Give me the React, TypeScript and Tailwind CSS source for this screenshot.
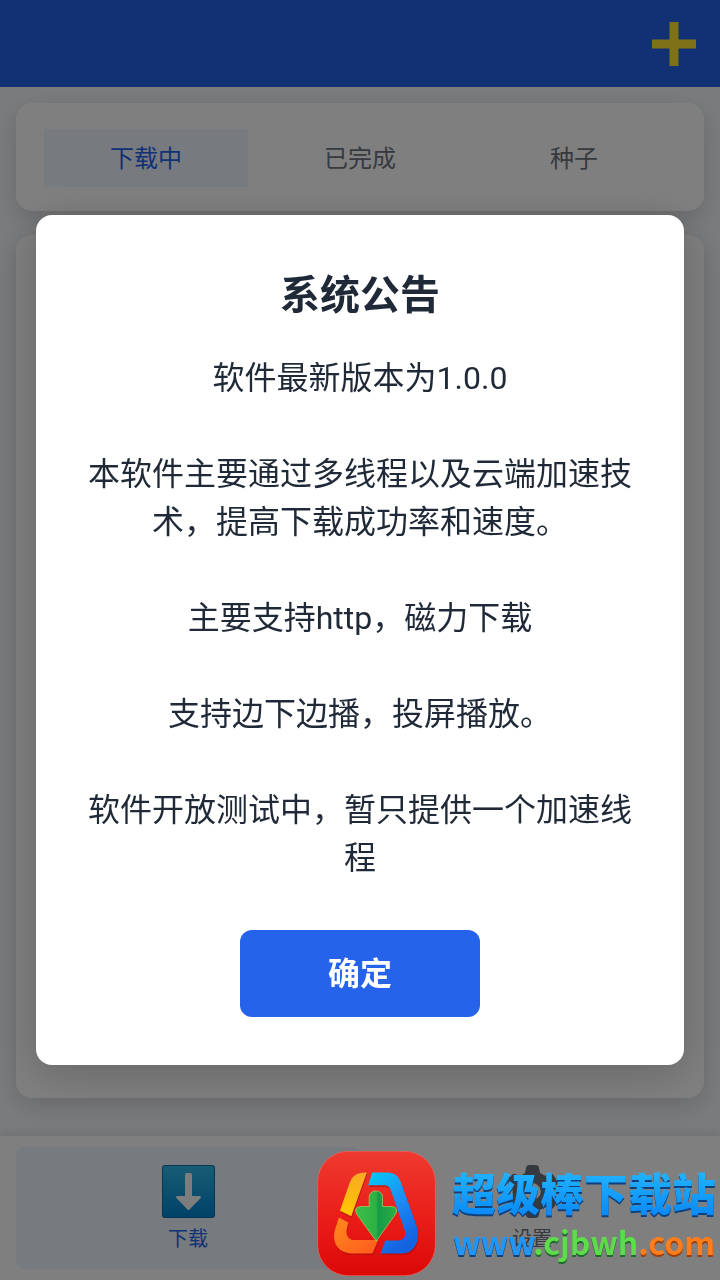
import { useState } from "react";
import { FaGear } from "react-icons/fa6";

const tabs = ["下载中", "已完成", "种子"];

const notices = [
  "软件最新版本为1.0.0",
  "本软件主要通过多线程以及云端加速技术，提高下载成功率和速度。",
  "主要支持http，磁力下载",
  "支持边下边播，投屏播放。",
  "软件开放测试中，暂只提供一个加速线程",
];

const PlusIcon = () => (
  <svg viewBox="0 0 44 44" className="size-11" aria-hidden="true">
    <path d="M17.5 0h9v17.5H44v9H26.5V44h-9V26.5H0v-9h17.5z" fill="#ffe42c" />
  </svg>
);

const DownloadIcon = () => (
  <svg viewBox="0 0 53 53" className="size-[53px]" aria-hidden="true">
    <defs>
      <linearGradient id="tile" x1="0" y1="0" x2="0" y2="1">
        <stop offset="0" stopColor="#30b8ea" />
        <stop offset="1" stopColor="#0284d0" />
      </linearGradient>
    </defs>
    <rect width="53" height="53" rx="3" fill="#0b6fa8" />
    <rect x="1" y="1" width="51" height="51" rx="2" fill="url(#tile)" />
    <path d="M24.5 8h4q1.500 0 1.500 1.500V31h8q1.800.8.5 2.200L27.500 44.500q-1 1-2 0L14.500 33.200q-1.300-1.400.5-2.200h8V9.500Q23 8 24.500 8z" fill="#fafafa" />
  </svg>
);

const SiteLogo = () => (
  <svg viewBox="52 62 356 376" className="h-[125px] w-[119px] shrink-0" aria-hidden="true">
    <defs>
      <linearGradient id="red" x1="0" y1="0" x2="0" y2="1">
        <stop offset="0" stopColor="#ee3a30" />
        <stop offset="0.5" stopColor="#ea1f1a" />
        <stop offset="1" stopColor="#dc0808" />
      </linearGradient>
      <linearGradient id="yellow" x1="0" y1="0" x2="0" y2="1">
        <stop offset="0" stopColor="#f9a825" />
        <stop offset="1" stopColor="#ffc800" />
      </linearGradient>
      <linearGradient id="orange" x1="0" y1="0" x2="1" y2="1">
        <stop offset="0" stopColor="#ff8a1c" />
        <stop offset="1" stopColor="#ff5a1f" />
      </linearGradient>
      <linearGradient id="blue" x1="0" y1="0" x2="0.5" y2="1">
        <stop offset="0" stopColor="#00cdf5" />
        <stop offset="0.5" stopColor="#1e8ff5" />
        <stop offset="1" stopColor="#1463e0" />
      </linearGradient>
      <linearGradient id="green" x1="0" y1="0" x2="1" y2="0">
        <stop offset="0" stopColor="#3cbf4a" />
        <stop offset="0.5" stopColor="#2fb044" />
        <stop offset="0.55" stopColor="#159a48" />
        <stop offset="1" stopColor="#2fae44" />
      </linearGradient>
    </defs>
    <rect x="53" y="63" width="354" height="374" rx="92" fill="url(#red)" stroke="#f0685c" strokeWidth="2" />
    <g fill="#9c0d0d" opacity="0.5" transform="translate(2 5)">
      <path d="M201 127C171 126 158 136 149 158L120 242l34 16z" />
      <path d="M117 262l28 15-4 18c-5 20 4 35 24 35h70l-17 40h-63c-42 0-60-35-50-70z" />
      <path d="M217 127h45c23 0 35 11 43 33l45 125c15 45-5 85-45 85h-63l15-39h38c20 0 25-16 19-33l-39-113c-5-15-10-20-25-20h-45z" />
    </g>
    <path d="M201 127C171 126 158 136 149 158L120 242l34 16z" fill="url(#yellow)" />
    <path d="M117 262l28 15-4 18c-5 20 4 35 24 35h70l-17 40h-63c-42 0-60-35-50-70z" fill="url(#orange)" />
    <path d="M217 127h45c23 0 35 11 43 33l45 125c15 45-5 85-45 85h-63l15-39h38c20 0 25-16 19-33l-39-113c-5-15-10-20-25-20h-45z" fill="url(#blue)" />
    <path
      d="M208 229v-29a20 18 0 0 1 40 0v29h29q20 3 11 22L229 333 170 251q-9-19 11-22z"
      fill="url(#green)"
      stroke="#a8dc6a"
      strokeWidth="2"
      strokeLinejoin="round"
    />
  </svg>
);

const Watermark = () => (
  <div className="pointer-events-none fixed right-1 bottom-1 z-30 flex items-center gap-4">
    <SiteLogo />
    <div className="pt-1 text-center font-bold whitespace-nowrap">
      <p className="bg-linear-to-b from-[#22b4ff] to-[#0a84f5] bg-clip-text text-[44px] leading-[50px] font-black text-transparent drop-shadow-[0_2px_0_#10407c]">
        超级棒下载站
      </p>
      <p className="font-['Noto_Sans_CJK_SC',sans-serif] text-[32px] leading-[40px]">
        <span className="text-[#1e96fa] text-shadow-[0_2px_0_#10407c]">www</span>
        <span className="text-[#5fdc4c] text-shadow-[0_2px_0_#1f6b2c]">.cjbwh</span>
        <span className="text-[#ff7d1a] text-shadow-[0_2px_0_#9a3c0c]">.com</span>
      </p>
    </div>
  </div>
);

const NoticeDialog = ({ onClose }: { onClose: () => void }) => (
  <div className="fixed inset-0 z-20 flex items-center justify-center bg-black/50">
    <div
      role="dialog"
      aria-modal="true"
      aria-labelledby="notice-title"
      className="flex w-[90%] flex-col items-center rounded-2xl bg-white p-12 text-center text-[#1f2937] shadow-[0_8px_40px_rgba(0,0,0,0.2)]"
    >
      <h2 id="notice-title" className="mb-[25px] text-[40px] leading-[66px] font-bold">系统公告</h2>
      <div className="space-y-12 text-[32px] leading-[48px]">
        {notices.map((text) => (
          <p key={text}>{text}</p>
        ))}
      </div>
      <button type="button" onClick={onClose} className="mt-12 h-[87px] w-60 rounded-xl bg-[#2563eb] text-[32px] font-bold text-white">
        确定
      </button>
    </div>
  </div>
);

const App = () => {
  const [activeTab, setActiveTab] = useState(tabs[0]);
  const [open, setOpen] = useState(true);

  return (
    <div className="flex min-h-screen flex-col bg-[#f5f7fa] font-[Roboto,'Noto_Sans_CJK_SC',sans-serif]">
      <header className="flex h-[87px] items-center justify-end bg-[#2563eb] px-6">
        <button type="button" aria-label="添加">
          <PlusIcon />
        </button>
      </header>

      <main className="flex flex-1 flex-col gap-6 px-4 pt-4 pb-[38px]">
        <div className="flex gap-2.5 rounded-2xl bg-white px-7 pt-[26px] pb-6 shadow-[0_8px_24px_rgba(0,0,0,0.14)]">
          {tabs.map((tab) => (
            <button
              key={tab}
              type="button"
              onClick={() => setActiveTab(tab)}
              className={`h-[58px] flex-1 pt-0.5 text-2xl ${tab === activeTab ? "bg-[#eff6ff] text-[#2563eb]" : "text-[#6b7280]"}`}
            >
              {tab}
            </button>
          ))}
        </div>
        <div className="flex-1 rounded-2xl bg-white shadow-[0_8px_24px_rgba(0,0,0,0.14)]" />
      </main>

      <nav className="flex bg-white px-4 py-[11px] shadow-[0_-2px_10px_rgba(0,0,0,0.1)]">
        <a href="#download" className="flex flex-1 flex-col items-center gap-[7px] rounded-lg bg-[#eff4fd] pt-[18px] pb-4 text-[#2563eb]">
          <DownloadIcon />
          <span className="text-xl leading-7">下载</span>
        </a>
        <a href="#settings" className="flex flex-1 flex-col items-center gap-[7px] rounded-lg pt-[18px] pb-4 text-[#6b7280]">
          <FaGear className="size-[53px]" />
          <span className="text-xl leading-7">设置</span>
        </a>
      </nav>

      {open && <NoticeDialog onClose={() => setOpen(false)} />}
      <Watermark />
    </div>
  );
};

export default App;
